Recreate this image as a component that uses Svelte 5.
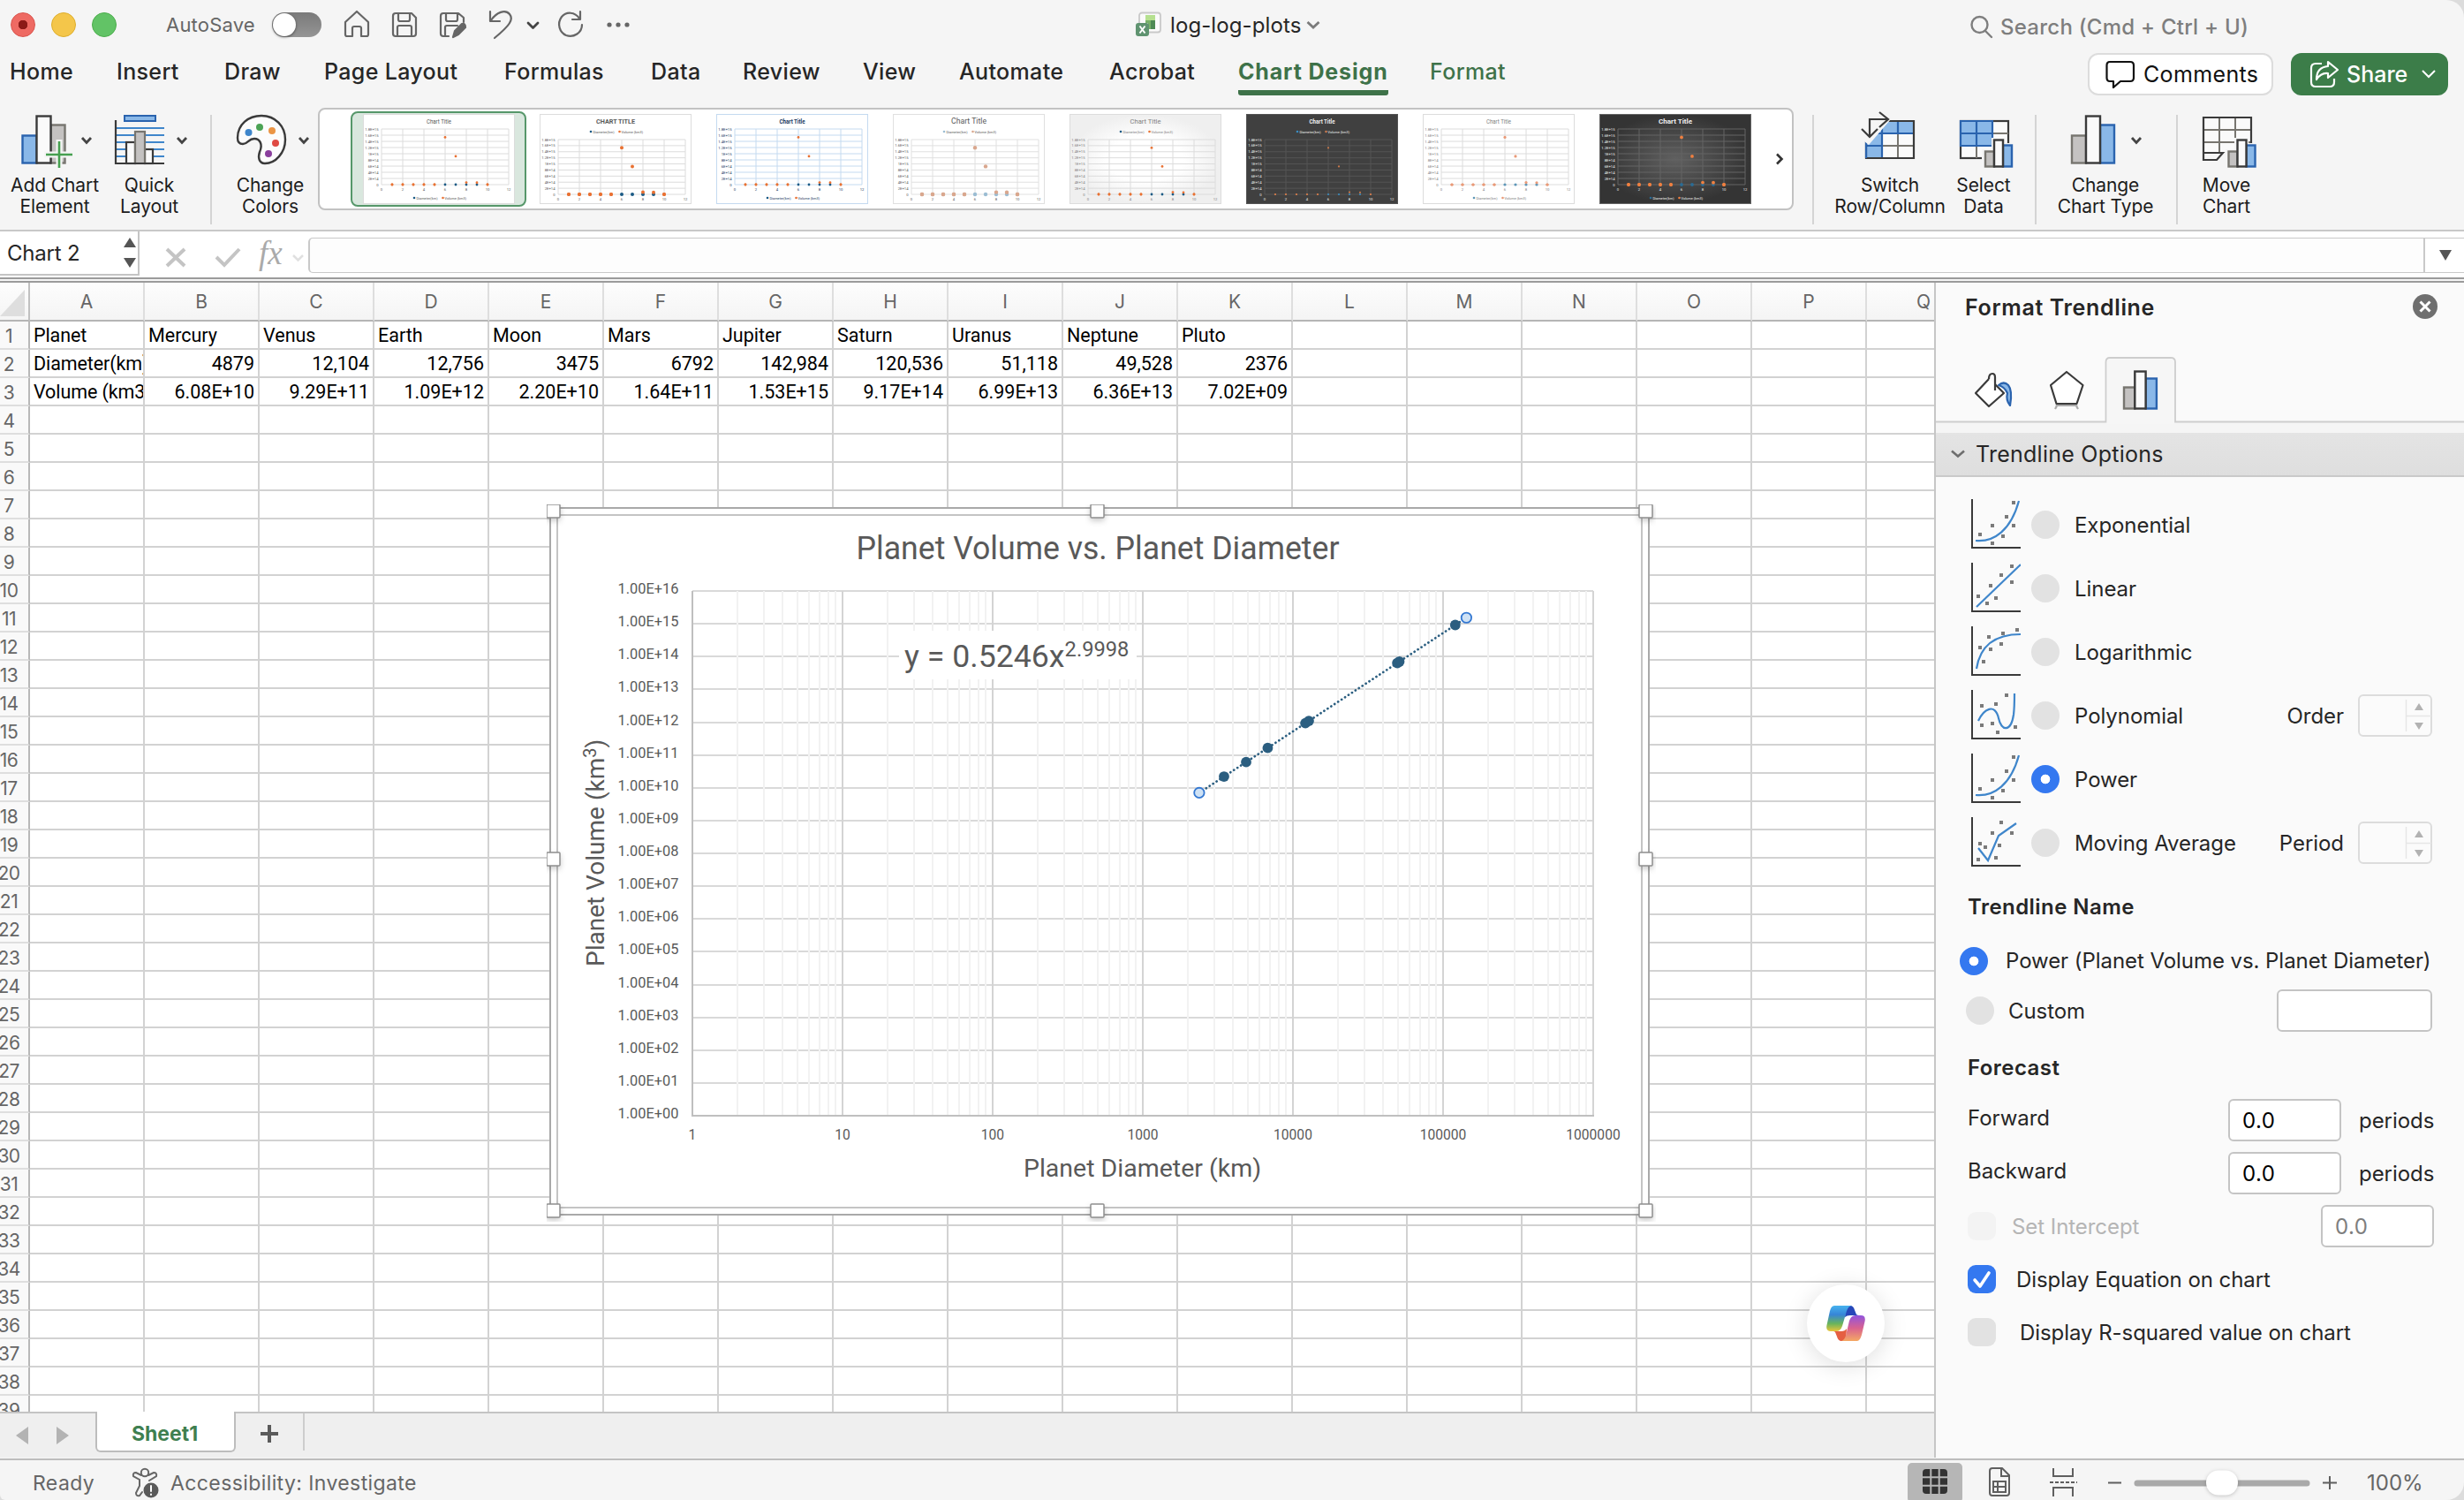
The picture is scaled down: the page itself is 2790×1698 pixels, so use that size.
<script lang="ts">
	const tabs = [
		'Home',
		'Insert',
		'Draw',
		'Page Layout',
		'Formulas',
		'Data',
		'Review',
		'View',
		'Automate',
		'Acrobat',
		'Chart Design',
		'Format'
	];

	// Sheet
	const columns = 'ABCDEFGHIJKLMNOPQ'.split('');
	const rowNumbers = Array.from({ length: 39 }, (_, i) => i + 1);
	const cells: Record<number, string[]> = {
		1: ['Planet', 'Mercury', 'Venus', 'Earth', 'Moon', 'Mars', 'Jupiter', 'Saturn', 'Uranus', 'Neptune', 'Pluto'],
		2: ['Diameter(km)', '4879', '12,104', '12,756', '3475', '6792', '142,984', '120,536', '51,118', '49,528', '2376'],
		3: ['Volume (km3)', '6.08E+10', '9.29E+11', '1.09E+12', '2.20E+10', '1.64E+11', '1.53E+15', '9.17E+14', '6.99E+13', '6.36E+13', '7.02E+09']
	};

	// Chart: both axes are log10
	const diameters = [4879, 12104, 12756, 3475, 6792, 142984, 120536, 51118, 49528, 2376];
	const volumes = [6.08e10, 9.29e11, 1.09e12, 2.2e10, 1.64e11, 1.53e15, 9.17e14, 6.99e13, 6.36e13, 7.02e9];
	const plot = { left: 165, top: 98, width: 1020, height: 594 };
	const px = (d: number) => plot.left + (Math.log10(d) * plot.width) / 6;
	const py = (v: number) => plot.top + plot.height - (Math.log10(v) * plot.height) / 16;
	const points = diameters.map((d, i) => ({ x: px(d), y: py(volumes[i]), end: i === 5 || i === 9 }));
	const decades = [0, 1, 2, 3, 4, 5, 6];
	const minors = decades.slice(0, 6).flatMap((d) => [2, 3, 4, 5, 6, 7, 8, 9].map((m) => m * 10 ** d));
	const yTicks = Array.from({ length: 17 }, (_, i) => i);
	const handles = [
		[8, 8],
		[624, 8],
		[1245, 8],
		[8, 402],
		[1245, 402],
		[8, 800],
		[624, 800],
		[1245, 800]
	];

	// Chart style gallery; size and width are those of the title
	const styles = [
		{ bg: '#fff', grid: '#dcdcdc', text: '#595959', blue: '#1a5a85', orange: '#e97132', top: false, selected: true, bold: false, r: 1.4, size: 7, width: 28 },
		{ bg: '#fff', grid: '#dcdcdc', text: '#595959', blue: '#1a5a85', orange: '#e97132', top: true, caps: true, bold: true, r: 2, size: 7, width: 44 },
		{ bg: '#fff', grid: '#c4daf0', text: '#17375e', blue: '#1a5a85', orange: '#e97132', top: false, bold: true, r: 1.4, size: 6.5, width: 29 },
		{ bg: '#fff', grid: '#e0e0e0', text: '#595959', blue: '#9bbdd3', orange: '#d9a78e', top: true, bold: false, r: 2.2, size: 9, width: 40 },
		{ bg: 'url(#soft)', grid: '#dcdcdc', text: '#808080', blue: '#1a5a85', orange: '#e97132', top: true, bold: false, r: 1.4, size: 8, width: 35 },
		{ bg: '#404040', grid: '#545454', text: '#eee', blue: '#3a8cc0', orange: '#c9794c', top: true, bold: true, r: 1.1, size: 6.5, width: 29 },
		{ bg: '#fff', grid: '#dcdcdc', text: '#808080', blue: '#5e97b8', orange: '#e99a78', top: false, bold: false, r: 1.6, size: 7, width: 28 },
		{ bg: 'url(#night)', grid: '#646464', text: '#f0f0f0', blue: '#2a6c95', orange: '#f08040', top: false, bold: true, r: 1.9, size: 8, width: 38 }
	];
	const thumbLabels = ['1.8E+15', '1.6E+15', '1.4E+15', '1.2E+15', '1E+15', '8E+14', '6E+14', '4E+14', '2E+14', '0'];
	const thumbValues = [0, 0, 0, 0, 0, 1.53, 0.917, 0.07, 0.064, 0];

	// Trendline kinds with their little pictures
	const kinds = [
		{ label: 'Exponential', curve: 'M5 47C26 49 45 35 54 2', dots: [[48, 4], [40, 20], [24, 30], [48, 30], [10, 40], [36, 42], [24, 50]] },
		{ label: 'Linear', curve: 'M6 50L56 2', dots: [[46, 4], [34, 14], [46, 22], [22, 26], [8, 38], [28, 40], [18, 46]] },
		{ label: 'Logarithmic', curve: 'M6 48C10 22 26 9 56 9', dots: [[52, 4], [36, 8], [20, 12], [34, 20], [10, 24], [22, 26], [14, 40]] },
		{ label: 'Polynomial', curve: 'M8 35C14 22 27 14 31 32C34 47 45 48 48 28C49 20 49 12 49 4', dots: [[40, 6], [28, 16], [12, 18], [12, 40], [24, 38], [50, 42], [30, 48]], field: 'Order' },
		{ label: 'Power', curve: 'M5 47C26 49 45 35 54 2', dots: [[48, 4], [40, 20], [24, 30], [48, 30], [10, 40], [36, 42], [24, 50]], checked: true },
		{ label: 'Moving Average', curve: 'M8 35L19 49L31 21L51 7', dots: [[34, 6], [24, 18], [46, 18], [10, 30], [16, 34], [32, 32], [8, 48], [28, 46]], field: 'Period' }
	];
</script>

{#snippet bars(x: number, y: number, w: number, heights: number[], blueFirst = false)}
	<g stroke-width="2.4">
		<rect {x} y={y - heights[0]} width={w} height={heights[0]} fill={blueFirst ? '#8ab8e8' : '#c4c2c1'} stroke={blueFirst ? '#2a63ae' : '#77756f'} />
		<rect x={x + 2 * w} y={y - heights[2]} width={w} height={heights[2]} fill={blueFirst ? '#c4c2c1' : '#8ab8e8'} stroke={blueFirst ? '#77756f' : '#2a63ae'} />
		<rect x={x + w} y={y - heights[1]} width={w} height={heights[1]} fill="#fafafa" stroke="#3a3a3a" />
	</g>
{/snippet}

{#snippet thumb(s)}
	{@const t = s.top ? 29 : 17}
	{@const h = s.top ? 62 : 63}
	<svg class="thumb" viewBox="0 0 172 102">
		<rect x=".5" y=".5" width="171" height="101" fill={s.bg} stroke={s.grid} />
		<text x="86" y={s.top ? 11 : 10.5} font-size={s.size} font-weight={s.bold ? 700 : 400} textLength={s.width} lengthAdjust="spacingAndGlyphs" text-anchor="middle" fill={s.text}>{s.caps ? 'CHART TITLE' : 'Chart Title'}</text>
		{#each thumbLabels as label, i}
			<path d="M21 {t + (i * h) / 9}H165" stroke={s.grid} />
			<text x="17.5" y={t + (i * h) / 9 + 1.5} font-size="4.2" text-anchor="end" fill={s.text}>{label}</text>
		{/each}
		{#each decades as n}
			<path d="M{21 + n * 24} {t}V{t + h}" stroke={s.grid} />
			<text x={21 + n * 24} y={t + h + 6.5} font-size="4.2" text-anchor="middle" fill={s.text}>{n * 2}</text>
		{/each}
		{#each thumbValues as v, i}
			<circle cx={33 + i * 12} cy={t + h} r={s.r} fill={i > 4 && i < 9 ? s.blue : s.orange} />
			<circle cx={33 + i * 12} cy={t + h - (v * h) / 1.8} r={v > 0 || i < 5 || i === 9 ? s.r : 0} fill={s.orange} />
		{/each}
		<g font-size="4.2" fill={s.text} transform="translate(0 {s.top ? 20 : 95})">
			<circle cx="58" cy="0" r="1.3" fill={s.blue} />
			<text x="60.5" y="1.6" textLength="24" lengthAdjust="spacingAndGlyphs">Diameter(km)</text>
			<circle cx="90.5" cy="0" r="1.3" fill={s.orange} />
			<text x="92.500" y="1.6" textLength="24.500" lengthAdjust="spacingAndGlyphs">Volume (km3)</text>
		</g>
	</svg>
{/snippet}

{#snippet spinner()}
	<svg class="spinner" width="84" height="48" viewBox="0 0 84 48">
		<rect x="1" y="1" width="82" height="46" rx="5" fill="#fbfbfb" stroke="#dcdcdc" stroke-width="2" />
		<path d="M54.500 6V42M55 24.500H83" stroke="#e6e6e6" stroke-width="1.500" />
		<path d="M64 18H74L69 10ZM64 32H74L69 40Z" fill="#b2b2b2" />
	</svg>
{/snippet}

<div class="window">
	<svg class="defs" width="0" height="0">
		<defs>
			<radialGradient id="soft"><stop offset=".5" stop-color="#fff" /><stop offset="1" stop-color="#efefef" /></radialGradient>
			<radialGradient id="night"><stop offset="0" stop-color="#606060" /><stop offset="1" stop-color="#343434" /></radialGradient>
		</defs>
	</svg>

	<header class="titlebar">
		<div class="lights"><i class="red"></i><i class="yellow"></i><i class="green"></i></div>
		<span class="autosave">AutoSave</span>
		<span class="toggle"><i></i></span>
		<svg class="quick" width="340" height="56" viewBox="380 0 340 56" fill="none" stroke="#666" stroke-width="2.200" stroke-linejoin="round" stroke-linecap="round">
			<path d="M391 25L404 13L417 25V39Q417 41 415 41H409V32Q409 30 407 30H401Q399 30 399 32V41H393Q391 41 391 39Z" />
			<path d="M448 15H466L471 20V38Q471 41 468 41H448Q445 41 445 38V18Q445 15 448 15ZM451 15V22Q451 24 453 24H462Q464 24 464 22V15M450 41V31Q450 29 452 29H464Q466 29 466 31V41" />
			<path d="M508 41H502Q499 41 499 38V18Q499 15 502 15H519L525 20V25M505 15V22Q505 24 507 24H516Q518 24 518 22V15M504 41V31Q504 29 506 29H518" />
			<path d="M513 42L515 35L523 27Q527 26 527 31L519 39Z" fill="#666" />
			<path d="M555 13V24H566M556 23C562 14 572 10 577 16C582 22 577 29 560 43" />
			<path d="M598 26L603.500 31.500L609 26" stroke="#444" stroke-width="2.800" />
			<path d="M657 13V22H648M656 21C651 13 641 13 636 19C630 27 634 37 641 40C650 43 659 37 659 28" />
			<g fill="#666" stroke="none"><circle cx="690" cy="28" r="2.600" /><circle cx="700" cy="28" r="2.600" /><circle cx="710" cy="28" r="2.600" /></g>
		</svg>
		<div class="doc">
			<svg width="30" height="30" viewBox="0 0 30 30">
				<rect x="4" y="1.500" width="24" height="22" rx="3" fill="#fafafa" stroke="#c9c9c9" stroke-width="1.800" />
				<path d="M11 4H22V10H11Z" fill="#b5e08f" /><path d="M11 10H22V20H14V13H11Z" fill="#77b169" /><path d="M17 10H22V20H17Z" fill="#4e8a54" />
				<rect y="13" width="15" height="15" rx="3" fill="#5f9370" />
				<path d="M4.500 16.500L10.500 24.500M10.500 16.500L4.500 24.500" stroke="#fff" stroke-width="2" />
			</svg>
			<span>log-log-plots</span>
			<svg width="18" height="12" viewBox="0 0 18 12"><path d="M2.500 3L9 9L15.500 3" fill="none" stroke="#7b7b7b" stroke-width="2.800" /></svg>
		</div>
		<div class="search">
			<svg width="26" height="28" viewBox="0 0 26 28" fill="none" stroke="#7e7e7e" stroke-width="2.400" stroke-linecap="round"><circle cx="10.500" cy="11" r="9" /><path d="M17 18L24 25" /></svg>
			<span>Search (Cmd + Ctrl + U)</span>
		</div>
	</header>

	<nav class="menu">
		<div class="tabs">
			{#each tabs as tab}
				<span class:active={tab === 'Chart Design'} class:context={tab === 'Format'}>{tab}</span>
			{/each}
		</div>
		<div class="comments">
			<svg width="34" height="34" viewBox="0 0 34 34" fill="none" stroke="#111" stroke-width="2.200" stroke-linejoin="round"><path d="M5 3H28Q32 3 32 7V21Q32 25 28 25H17L9 32V25H5Q1.500 25 1.500 21V7Q1.500 3 5 3Z" /></svg>
			<span>Comments</span>
		</div>
		<div class="share">
			<svg width="34" height="32" viewBox="0 0 34 32" fill="none" stroke="#fff" stroke-width="2.200" stroke-linejoin="round"><path d="M14 4H7Q2 4 2 9V25Q2 30 7 30H23Q28 30 28 25V21" /><path d="M21 2L32 11L21 20V15Q13 14 8 22Q8 8 21 7Z" /></svg>
			<span>Share</span>
			<svg width="18" height="12" viewBox="0 0 18 12"><path d="M2 2L9 9L16 2" fill="none" stroke="#fff" stroke-width="2" /></svg>
		</div>
	</nav>

	<section class="ribbon">
		<div class="tool add">
			<svg width="124" height="68" viewBox="0 126 124 68">
				{@render bars(25.5, 184.500, 16, [31, 53, 43], true)}
				<path d="M67 158V191M50 175H84" stroke="#f5f5f5" stroke-width="7" /><path d="M67 160V190M52 175H82" stroke="#46a050" stroke-width="2.600" />
				<path d="M93 156L98 161.500L103 156" fill="none" stroke="#444" stroke-width="2.800" />
			</svg>
			<span>Add Chart<br />Element</span>
		</div>
		<div class="tool layout">
			<svg width="90" height="68" viewBox="124 126 90 68">
				<rect x="141" y="131" width="35" height="6" fill="#8ab8e8" stroke="#2a63ae" stroke-width="2" />
				<path d="M132 145H186M132 153H186M132 161H186M132 169H186M132 177H186" stroke="#3f86cb" stroke-width="2" />
				<g fill="#fafafa" stroke="#3a3a3a" stroke-width="2.200"><rect x="143" y="161" width="10" height="24" /><rect x="164" y="169" width="9" height="16" /><rect x="153" y="149" width="11" height="36" fill="#c4c2c1" stroke="#77756f" /><path d="M131 136V185H186" fill="none" /></g>
				<path d="M201 156L206 161.500L211 156" fill="none" stroke="#444" stroke-width="2.800" />
			</svg>
			<span>Quick<br />Layout</span>
		</div>
		<hr />
		<div class="tool colors">
			<svg width="92" height="68" viewBox="260 126 92 68">
				<path d="M269 156C269 141 281 131 296 131C312 131 323 143 323 158C323 173 312 185 300 185C293 185 292 178 294 172C298 163 294 157 288 157C281 157 281 163 275 163C270 163 269 160 269 156Z" fill="#fcfcfc" stroke="#3a3a3a" stroke-width="2.400" />
				<circle cx="281.500" cy="150" r="4" fill="#3f86cb" /><circle cx="294" cy="144" r="4" fill="#4ca355" /><circle cx="308" cy="148" r="4" fill="#eb9545" /><circle cx="312" cy="162" r="4" fill="#df4a43" /><circle cx="304" cy="174" r="4" fill="#8a3f9d" />
				<path d="M339 156L344 161.500L349 156" fill="none" stroke="#444" stroke-width="2.800" />
			</svg>
			<span>Change<br />Colors</span>
		</div>
		<div class="gallery">
			{#each styles as s}
				<div class="style" class:selected={s.selected}>{@render thumb(s)}</div>
			{/each}
			<svg width="12" height="18" viewBox="0 0 12 18"><path d="M3 3.500L8.500 9L3 14.500" fill="none" stroke="#333" stroke-width="2.600" /></svg>
		</div>
		<hr class="after-gallery" />
		<div class="tool switch">
			<svg width="128" height="68" viewBox="2076 126 128 68">
				<rect x="2113" y="137" width="54" height="42" fill="#fafafa" />
				<path d="M2113 137H2167V151H2131V179H2113Z" fill="#8ab8e8" />
				<path d="M2149 151V179M2131 165H2167" stroke="#77756f" stroke-width="2" />
				<path d="M2149 137V151M2113 165H2131M2167 151H2131V179M2113 151H2131V137" fill="none" stroke="#2a63ae" stroke-width="2.200" />
				<path d="M2113 137H2167V179H2113Z" fill="none" stroke="#3a3a3a" stroke-width="2.200" /><path d="M2113 151V179" stroke="#2a63ae" stroke-width="2.200" />
				<path d="M2106 128H2136L2141 135L2116 164L2106 156Z" fill="#f5f5f5" />
				<path d="M2117 155V135H2138M2108 146L2117 155L2126 146M2128 127L2138 135L2128 144" fill="none" stroke="#3a3a3a" stroke-width="2.200" />
			</svg>
			<span>Switch<br />Row/Column</span>
		</div>
		<div class="tool select">
			<svg width="68" height="68" viewBox="2212 126 68 68">
				<rect x="2220" y="137" width="54" height="42" fill="#fafafa" stroke="#3a3a3a" stroke-width="2.200" />
				<path d="M2256 151H2274M2238 165V179M2256 165H2274" stroke="#77756f" stroke-width="2" />
				<path d="M2220 137H2256V165H2220ZM2238 137V165M2220 151H2256" fill="#8ab8e8" stroke="#2a63ae" stroke-width="2.200" />
				<path d="M2244 169H2255V156H2271V162H2282V194H2244Z" fill="#f5f5f5" />
				{@render bars(2248, 188.500, 10, [17, 30, 24])}
			</svg>
			<span>Select<br />Data</span>
		</div>
		<hr class="after-select" />
		<div class="tool type">
			<svg width="114" height="68" viewBox="2327 126 114 68">
				{@render bars(2346, 184.500, 16, [31, 53, 43])}
				<path d="M2414 156L2419 161.500L2424 156" fill="none" stroke="#444" stroke-width="2.800" />
			</svg>
			<span>Change<br />Chart Type</span>
		</div>
		<hr class="after-type" />
		<div class="tool move">
			<svg width="70" height="68" viewBox="2486 126 70 68">
				<rect x="2495" y="133" width="54" height="39" fill="#fafafa" />
				<path d="M2513 133V172M2531 133V172M2495 147H2549M2495 161H2549" stroke="#77756f" stroke-width="2" />
				<path d="M2549 172V133H2495V181H2510L2517 173H2495" fill="none" stroke="#3a3a3a" stroke-width="2.200" />
				<path d="M2520 169H2530V156H2546V162H2556V194H2520Z" fill="#f5f5f5" />
				{@render bars(2523.5, 188.500, 10, [17, 30, 24])}
			</svg>
			<span>Move<br />Chart</span>
		</div>
	</section>

	<section class="formula">
		<div class="namebox">
			<span>Chart 2</span>
			<svg width="16" height="36" viewBox="0 0 16 36" fill="#555"><path d="M1 12H15L8 1ZM1 24H15L8 35Z" /></svg>
		</div>
		<svg class="fx-icons" width="160" height="50" viewBox="178 263 160 50" fill="none" stroke="#c4c4c4" stroke-width="4">
			<path d="M189 282L209 301M209 282L189 301M245 291L254 300L271 282" />
			<path d="M332 289L337.500 294.500L343 289" stroke="#e0e0e0" stroke-width="2.500" />
			<text x="293" y="299" font-family="Liberation Serif" font-style="italic" font-size="37" fill="#aaa" stroke="none">fx</text>
		</svg>
		<div class="input"></div>
		<div class="expand"><svg width="16" height="12" viewBox="0 0 16 12"><path d="M1 0H15L8 12Z" fill="#555" /></svg></div>
	</section>

	<main>
		<div class="left">
			<div class="sheet">
				<div class="row head">
					<div class="corner"><svg width="32" height="42" viewBox="0 0 32 42"><path d="M28 8V38H0Z" fill="#dedede" /></svg></div>
					{#each columns as c}<div class="col">{c}</div>{/each}
				</div>
				{#each rowNumbers as n}
					<div class="row">
						<div class="num">{n}</div>
						{#each columns as _, i}
							<div class="cell" class:right={n > 1 && i > 0}>{cells[n]?.[i] ?? ''}</div>
						{/each}
					</div>
				{/each}

				<svg class="chart" width="1256" height="812" viewBox="0 0 1256 812">
					<rect x="4" y="4" width="1244" height="800" fill="#fff" stroke="#a9a9a9" stroke-width="2" />
					<rect x="12" y="12" width="1228" height="784" fill="#fff" stroke="#c4c4c4" stroke-width="2" />
					<text class="title" x="624" y="61.500" text-anchor="middle" textLength="547" lengthAdjust="spacingAndGlyphs">Planet Volume vs. Planet Diameter</text>
					{#each yTicks as n}
						<path d="M165 {Math.round(692 - n * 37.125)}H1185" stroke="#d9d9d9" stroke-width="2" />
						<text class="tick" x="149.500" y={Math.round(692 - n * 37.125) + 2.5} text-anchor="end" textLength="69" lengthAdjust="spacingAndGlyphs">1.00E+{String(n).padStart(2, '0')}</text>
					{/each}
					{#each minors as m}
						<path d="M{Math.round(px(m))} 98V692" stroke="#f2f2f2" stroke-width="2" />
					{/each}
					{#each decades as d}
						<path d="M{165 + d * 170} 98V692" stroke={d ? '#d4d4d4' : '#bfbfbf'} stroke-width="2" />
						<text class="tick" x={165 + d * 170} y="718.500" text-anchor="middle">{10 ** d}</text>
					{/each}
					<path d="M164 692H1186" stroke="#bfbfbf" stroke-width="2" />
					<rect x="399" y="143" width="269" height="55" fill="#fff" />
					<text class="equation" x="405" y="183.500">y = 0.5246x<tspan class="sup" dy="-12">2.9998</tspan></text>
					<path d="M{px(2376)} {py(7.02e9)}L{px(142984)} {py(1.53e15)}" stroke="#2b5e80" stroke-width="2.700" stroke-linecap="round" stroke-dasharray="0.100 4.600" />
					{#each points as p}
						{#if p.end}
							<circle cx={p.x} cy={p.y} r="5.700" fill="#cfe2f5" stroke="#3478d2" stroke-width="1.800" />
						{:else}
							<circle cx={p.x} cy={p.y} r="5.900" fill="#2b5e80" />
						{/if}
					{/each}
					<text class="axis" x="674.500" y="761" text-anchor="middle">Planet Diameter (km)</text>
					<text class="axis vertical" transform="translate(65 523) rotate(-90)">Planet Volume (km<tspan class="sup3" dy="-9">3</tspan><tspan dy="9">)</tspan></text>
					{#each handles as [x, y]}
						<rect class="handle" x={x - 8} y={y - 8} width="15" height="15" rx="1" />
					{/each}
				</svg>

				<div class="copilot">
					<svg width="44" height="40" viewBox="0 0 44 40">
						<defs>
							<linearGradient id="cp1" x1="0" y1="0" x2="0" y2="1"><stop offset="0" stop-color="#46b2ee" /><stop offset=".35" stop-color="#3685d8" /><stop offset=".7" stop-color="#68b45c" /><stop offset="1" stop-color="#eac53a" /></linearGradient>
							<linearGradient id="cp2" x1="0" y1="0" x2="0" y2="1"><stop offset="0" stop-color="#9153dd" /><stop offset=".5" stop-color="#d9628f" /><stop offset="1" stop-color="#f5a863" /></linearGradient>
						</defs>
						<path d="M22 0H28Q31 1 32 5L34 10Q35 11 37 11H27Q23 11 21 13Z" fill="#2747b9" />
						<path d="M22 40H16Q13 39 12 35L10 30Q9 29 8 29H17Q21 29 23 26Z" fill="#e55f42" />
						<path d="M9 0H29Q25 0 23 6L18 23Q16 29 11 29H5Q-1 29 .5 22L4 6Q5.500 0 9 0Z" fill="url(#cp1)" />
						<path d="M35 40H16Q20 40 22 34L26 17Q28 11 33 11H39Q45 11 43.500 18L40 33Q38 40 35 40Z" fill="url(#cp2)" />
					</svg>
				</div>
			</div>
			<div class="sheetbar">
				<svg width="108" height="50" viewBox="0 1600 108 50" fill="#b3b3b3"><path d="M32 1615V1635L18 1625ZM64 1615V1635L78 1625Z" /></svg>
				<div class="sheet-tab">Sheet1</div>
				<div class="plus"><svg width="20" height="20" viewBox="0 0 20 20"><path d="M10 0V20M0 10H20" stroke="#5a5a5a" stroke-width="4" /></svg></div>
			</div>
		</div>

		<aside>
			<div class="pane-title">
				<b>Format Trendline</b>
				<svg width="28" height="28" viewBox="0 0 28 28"><circle cx="14" cy="14" r="14" fill="#6f6f6f" /><path d="M8.500 8.500L19.500 19.500M19.500 8.500L8.500 19.500" stroke="#fff" stroke-width="3" /></svg>
			</div>
			<svg class="pane-tabs" width="598" height="86" viewBox="2192 404 598 86">
				<rect x="2192" y="478" width="598" height="12" fill="#f5f5f5" />
				<path d="M2192 477.500H2384.500V410Q2384.500 405 2389 405H2458Q2463 405 2463 410V477.500H2790" fill="none" stroke="#cdcdcd" stroke-width="1.800" />
				<path d="M2386 480V411Q2386 406 2390 406H2457Q2462 406 2462 411V480Z" fill="#f6f6f6" />
				<g fill="#fff" stroke="#3a3a3a" stroke-width="2.200" stroke-linejoin="round">
					<path d="M2252 429L2237 445L2252 460L2269 445L2259 435" />
					<path d="M2259 442V427Q2259 423 2256 423Q2252 423 2252 429" fill="none" />
					<path d="M2263 436Q2269 431 2274 436Q2279 442 2276 459Q2271 453 2273 445Q2270 438 2263 436Z" fill="#8ab8e8" stroke="#2a63ae" />
					<path d="M2340 421L2358.500 436L2351.500 457H2328.500L2322 436Z" />
					<path d="M2329 458Q2329 460 2327 463M2351 458Q2351 460 2353 463M2329 459H2351" stroke="#aaa" fill="none" />
				</g>
				{@render bars(2405, 462.500, 12.300, [24, 42, 34])}
			</svg>
			<div class="section"><svg width="18" height="12" viewBox="0 0 18 12"><path d="M2 2.500L9 8.500L16 2.500" fill="none" stroke="#6e6e6e" stroke-width="2.600" /></svg>Trendline Options</div>
			<div class="kinds">
				{#each kinds as k}
					<div class="kind">
						<svg width="56" height="58" viewBox="0 0 56 58">
							<path d="M1 0V55H56" fill="none" stroke="#3a3a3a" stroke-width="2" />
							{#each k.dots as [x, y]}<rect x={x - 2} y={y - 2} width="4" height="4" fill="#7a7a7a" />{/each}
							<path d={k.curve} fill="none" stroke="#3f86cb" stroke-width="2.200" />
						</svg>
						<i class="radio" class:on={k.checked}></i>
						<span>{k.label}</span>
						{#if k.field}
							<em>{k.field}</em>
							{@render spinner()}
						{/if}
					</div>
				{/each}
			</div>
			<h4>Trendline Name</h4>
			<div class="line auto"><i class="radio on"></i><span>Power (Planet Volume vs. Planet Diameter)</span></div>
			<div class="line custom"><i class="radio"></i><span>Custom</span><div class="field wide"></div></div>
			<h4 class="forecast">Forecast</h4>
			<div class="line fore"><span>Forward</span><div class="field">0.0</div><em>periods</em></div>
			<div class="line fore"><span>Backward</span><div class="field">0.0</div><em>periods</em></div>
			<div class="line check off"><i class="box"></i><span>Set Intercept</span><div class="field dim">0.0</div></div>
			<div class="line check eq"><i class="box on"><svg width="32" height="32" viewBox="0 0 32 32"><path d="M8 17L14 24L24 9" fill="none" stroke="#fff" stroke-width="3.600" stroke-linecap="round" stroke-linejoin="round" /></svg></i><span>Display Equation on chart</span></div>
			<div class="line check rsq"><i class="box"></i><span>Display R-squared value on chart</span></div>
		</aside>
	</main>

	<footer>
		<span class="ready">Ready</span>
		<svg width="34" height="40" viewBox="148 1660 34 40" fill="none" stroke="#666" stroke-width="2" stroke-linecap="round">
			<circle cx="164" cy="1667" r="4.200" />
			<path d="M160 1670L154 1667Q150 1667 151 1671L158 1675V1682L154 1690Q154 1694 158 1693L161 1689M168 1670L174 1667Q178 1667 177 1671L169 1676" />
			<circle cx="171" cy="1687" r="8.500" fill="#5a5a5a" stroke="none" /><path d="M171 1682V1688M171 1691.500V1692" stroke="#fff" />
		</svg>
		<span class="access">Accessibility: Investigate</span>
		<div class="views">
			<div class="normal">
				<svg width="28" height="28" viewBox="0 0 28 28"><rect width="28" height="28" rx="4" fill="#333" /><path d="M9.300 0V28M18.700 0V28M0 9.300H28M0 18.700H28" stroke="#b6b6b6" stroke-width="2" /></svg>
			</div>
			<svg width="568" height="45" viewBox="2222 1653 568 45" fill="none" stroke="#5f5f5f" stroke-width="2">
				<path d="M2256 1662H2267L2275 1670V1690Q2275 1693 2272 1693H2256Q2253 1693 2253 1690V1665Q2253 1662 2256 1662ZM2266 1662V1671H2275M2257 1677H2271V1689H2257ZM2257 1683H2271M2262 1677V1689" />
				<path d="M2325 1662V1671H2347V1662M2325 1694V1684H2347V1694" /><path d="M2321 1678H2352" stroke-dasharray="4 2" />
				<path d="M2387 1678.500H2402M2630 1678.500H2646M2638 1671V1686" />
				<path d="M2420 1679H2612" stroke="#a9a9a9" stroke-width="7" stroke-linecap="round" />
				<rect class="knob" x="2498" y="1664.500" width="36" height="28" rx="14" />
				<text class="zoom" x="2680" y="1687">100%</text>
			</svg>
		</div>
	</footer>
</div>

<style>
	:global(body) {
		margin: 0;
		background: #dcdcdc;
	}

	.window {
		width: 2790px;
		height: 1698px;
		display: flex;
		flex-direction: column;
		overflow: hidden;
		border-radius: 0 20px 20px 6px;
		background: #f5f5f5;
		color: #262626;
		font-family: Inter, sans-serif;
		font-size: 24px;
		white-space: nowrap;
	}

	svg {
		flex: none;
		display: block;
	}

	.defs {
		position: absolute;
	}

	/* title bar */
	.titlebar {
		height: 56px;
		display: flex;
		align-items: center;
		padding-left: 12px;
	}

	.lights {
		display: flex;
		gap: 18px;
	}

	.lights i {
		width: 28px;
		height: 28px;
		border-radius: 50%;
		box-sizing: border-box;
	}

	.red {
		background: radial-gradient(circle, #8c1a17 5px, #ee6a63 5.500px);
		border: 1px solid #d9534c;
	}

	.yellow {
		background: #f4c64a;
		border: 1px solid #deae2d;
	}

	.green {
		background: #62c366;
		border: 1px solid #4cae4c;
	}

	.autosave {
		width: 120px;
		margin-left: 56px;
		font-size: 22px;
		letter-spacing: 0.2px;
		color: #666;
	}

	.toggle {
		width: 56px;
		height: 28px;
		border-radius: 14px;
		background: linear-gradient(#7a7a7a, #959595);
	}

	.toggle i {
		display: block;
		width: 26px;
		height: 26px;
		margin: 1px;
		border-radius: 50%;
		background: #fff;
		box-shadow: 0 1px 3px #0008;
	}

	.quick {
		margin-left: 16px;
	}

	.doc {
		display: flex;
		align-items: center;
		width: 220px;
		margin-left: 566px;
	}

	.doc span {
		margin: 0 5px 0 9px;
		font-size: 24px;
		letter-spacing: 0.1px;
	}

	.search {
		display: flex;
		align-items: center;
		gap: 8px;
		margin-left: 725px;
		padding-top: 5px;
		color: #7e7e7e;
		font-size: 24px;
		font-weight: 500;
		letter-spacing: 0.25px;
	}

	/* menu */
	.menu {
		height: 58px;
		display: flex;
		align-items: flex-start;
		padding-top: 4px;
		box-sizing: border-box;
	}

	.tabs {
		display: grid;
		grid-template-columns: 121px 122px 113px 204px 166px 104px 136px 109px 170px 146px 217px 100px;
		width: 2353px;
		padding-left: 11px;
		box-sizing: border-box;
		font-size: 25px;
		font-weight: 500;
		letter-spacing: 0.35px;
	}

	.tabs span {
		justify-self: start;
		height: 48px;
		line-height: 42px;
		box-sizing: border-box;
	}

	.tabs .active {
		border-bottom: 6px solid #3e7249;
		border-radius: 3px;
		font-weight: 700;
		letter-spacing: 0.85px;
		color: #3e7249;
	}

	.tabs .context {
		color: #3e7249;
	}

	.comments,
	.share {
		height: 48px;
		display: flex;
		align-items: center;
		box-sizing: border-box;
		border-radius: 12px;
		font-size: 25px;
	}

	.comments {
		width: 210px;
		margin-left: 11px;
		padding-left: 18px;
		gap: 9px;
		border: 2px solid #dcdcdc;
		background: #fff;
		letter-spacing: 0.35px;
		color: #111;
	}

	.share {
		width: 178px;
		margin-left: 20px;
		padding-left: 21px;
		background: #3c7d49;
		color: #fff;
		font-weight: 500;
	}

	.share span {
		width: 84px;
		margin-left: 8px;
	}

	/* ribbon */
	.ribbon {
		height: 146px;
		display: flex;
		align-items: flex-start;
		border-bottom: 2px solid #c8c8c8;
	}

	.tool {
		display: flex;
		flex-direction: column;
		align-items: center;
		padding-top: 12px;
	}

	.tool span {
		width: 160px;
		margin: 4px -50px 0;
		text-align: center;
		font-size: 21px;
		line-height: 24px;
		letter-spacing: -0.1px;
		color: #1c1c1c;
	}

	.ribbon hr {
		width: 2px;
		height: 124px;
		margin: 16px 20px 0 24px;
		border: 0;
		background: #d4d4d4;
	}

	.ribbon .after-gallery {
		margin: 16px 22px 0 21px;
	}

	.select {
		margin-left: 8px;
	}

	.ribbon .after-select {
		margin: 16px 21px 0 24px;
	}

	.ribbon .after-type {
		margin: 16px 20px 0 23px;
	}

	.gallery {
		width: 1671px;
		height: 116px;
		display: flex;
		align-items: center;
		box-sizing: border-box;
		margin: 8px 0 0 8px;
		padding-left: 35px;
		border: 2px solid #c2c2c2;
		border-radius: 8px;
		background: #fff;
	}

	.style {
		width: 200px;
		height: 108px;
		display: flex;
		align-items: center;
		justify-content: center;
	}

	.style.selected {
		width: 199px;
		margin-right: 1px;
		box-sizing: border-box;
		border: 2.500px solid #56976a;
		border-radius: 8px;
		background: #d9e7de;
	}

	.thumb {
		width: 172px;
		height: 102px;
		font-family: Roboto, sans-serif;
	}

	.gallery > svg {
		margin-left: 12px;
	}

	/* formula bar */
	.formula {
		height: 52px;
		display: flex;
		background: #fff;
	}

	.namebox {
		width: 158px;
		height: 50px;
		display: flex;
		align-items: center;
		justify-content: space-between;
		box-sizing: border-box;
		padding: 0 1px 0 8px;
		border: solid #c4c4c4;
		border-width: 0 2px 2px 0;
		font-size: 24px;
		letter-spacing: -0.2px;
	}

	.fx-icons {
		margin: 1px 11px 0 20px;
		overflow: visible;
	}

	.input {
		flex: 1;
		height: 40px;
		box-sizing: border-box;
		margin-top: 7px;
		border: solid #c9c9c9;
		border-width: 1px 0 1px 2px;
		border-radius: 5px 0 0 5px;
		background: #fdfdfd;
	}

	.expand {
		width: 46px;
		height: 40px;
		display: flex;
		align-items: center;
		box-sizing: border-box;
		margin-top: 7px;
		padding-left: 15px;
		border: solid #c9c9c9;
		border-width: 1px 0 1px 2px;
	}

	/* sheet */
	main {
		height: 1331px;
		display: flex;
		border-top: 6px double #9b9b9b;
		overflow: hidden;
	}

	.left {
		width: 2190px;
		height: 1330px;
		overflow: hidden;
	}

	.sheet {
		position: relative;
		height: 1278px;
		overflow: hidden;
		background: #fff;
		font-size: 21px;
	}

	.row {
		display: flex;
		height: 32px;
	}

	.row > div {
		flex: none;
		box-sizing: border-box;
	}

	.head {
		height: 44px;
		background: linear-gradient(#fdfdfd, #f4f4f4);
		color: #666;
	}

	.corner {
		width: 34px;
		border-right: 2px solid #c0c0c0;
		border-bottom: 2px solid #b5b5b5;
	}

	.col {
		width: 130px;
		line-height: 44px;
		text-align: center;
		border-right: 2px solid #dedede;
		border-bottom: 2px solid #b5b5b5;
	}

	.num {
		width: 34px;
		display: flex;
		justify-content: center;
		padding-right: 12px;
		line-height: 34px;
		background: #f9f9f9;
		border-right: 2px solid #b8b8b8;
		border-bottom: 2px solid #dedede;
		color: #666;
		letter-spacing: -0.5px;
	}

	.cell {
		width: 130px;
		padding: 0 4px;
		overflow: hidden;
		line-height: 32px;
		border: solid #d2d2d2;
		border-width: 0 2px 2px 0;
		font-family: Roboto, sans-serif;
		font-size: 21.500px;
		color: #000;
	}

	.num + .cell {
		padding-right: 0;
		letter-spacing: -0.1px;
	}

	.right {
		text-align: right;
	}

	.chart {
		position: absolute;
		left: 619px;
		top: 251px;
		font-family: Roboto, sans-serif;
		fill: #595959;
	}

	.title {
		font-size: 37px;
	}

	.tick {
		font-size: 15.600px;
	}

	.equation {
		font-size: 35.700px;
	}

	.sup {
		font-size: 23.700px;
	}

	.axis {
		font-size: 28.500px;
	}

	.vertical {
		font-size: 28px;
	}

	.sup3 {
		font-size: 20px;
	}

	.handle {
		fill: #fff;
		stroke: #8f8f8f;
		stroke-width: 1.500;
		filter: drop-shadow(0 3px 3px #0003);
	}

	.copilot {
		position: absolute;
		left: 2046px;
		top: 1134px;
		width: 88px;
		height: 88px;
		display: flex;
		align-items: center;
		justify-content: center;
		border-radius: 50%;
		background: #fff;
		box-shadow: 0 4px 28px #0002;
	}

	.sheetbar {
		height: 52px;
		display: flex;
		box-sizing: border-box;
		border-top: 2px solid #c4c4c4;
		background: #efefef;
	}

	.sheet-tab {
		width: 159px;
		height: 46px;
		margin-top: -2px;
		box-sizing: border-box;
		padding-right: 2px;
		border: solid #bdbdbd;
		border-width: 0 2px 2px;
		border-radius: 0 0 6px 6px;
		background: #fff;
		line-height: 50px;
		text-align: center;
		font-size: 23px;
		font-weight: 700;
		letter-spacing: 0;
		color: #3f7f50;
	}

	.plus {
		width: 78px;
		height: 42px;
		display: flex;
		align-items: center;
		justify-content: center;
		box-sizing: border-box;
		padding-top: 4px;
		border-right: 2px solid #cdcdcd;
	}

	/* format pane */
	aside {
		width: 598px;
		height: 1330px;
		border-left: 2px solid #c6c6c6;
		background: #fafafa;
		letter-spacing: -0.06px;
	}

	.pane-title {
		height: 84px;
		display: flex;
		justify-content: space-between;
		box-sizing: border-box;
		padding: 13px 30px 0 33px;
		font-size: 25px;
		line-height: 30px;
		letter-spacing: 0.65px;
	}

	.pane-title b,
	h4 {
		font-weight: 600;
	}

	.section {
		height: 52px;
		display: flex;
		align-items: center;
		gap: 11px;
		box-sizing: border-box;
		margin-top: -2px;
		padding-left: 16px;
		border: solid #c9c9c9;
		border-width: 2px 0;
		background: linear-gradient(#e4e4e4, #dedede);
		font-size: 25px;
		letter-spacing: 0.25px;
	}

	.kinds {
		padding-top: 18px;
	}

	.kind {
		height: 72px;
		display: flex;
		align-items: center;
		padding: 0 36px 0 40px;
	}

	.radio {
		flex: none;
		width: 32px;
		height: 32px;
		border-radius: 50%;
		background: #e2e2e2;
	}

	.radio.on {
		background: radial-gradient(circle, #fff 5px, #3478f0 5.700px);
	}

	.kind .radio {
		margin: 0 17px 0 12px;
	}

	em {
		font-style: normal;
	}

	.kind em {
		margin: 0 16px 0 auto;
	}

	h4 {
		height: 74px;
		margin: 0;
		padding-left: 36px;
		line-height: 74px;
		font-size: 24px;
		letter-spacing: 0.45px;
	}

	.forecast {
		height: 62px;
		line-height: 66px;
	}

	.line {
		height: 60px;
		display: flex;
		align-items: center;
	}

	.auto {
		height: 48px;
		gap: 20px;
		padding-left: 27px;
	}

	.auto span {
		padding-bottom: 2px;
	}

	.custom {
		height: 64px;
		gap: 16px;
		padding: 0 36px 0 34px;
	}

	.field {
		width: 128px;
		height: 48px;
		box-sizing: border-box;
		margin-left: auto;
		padding-left: 14px;
		border: 2px solid #c4c4c4;
		border-radius: 6px;
		background: #fff;
		line-height: 46px;
		letter-spacing: 0.4px;
		color: #000;
	}

	.wide {
		width: 176px;
	}

	.dim {
		color: #7e7e7e;
	}

	.fore {
		padding: 0 35px 0 36px;
	}

	.fore span {
		padding-bottom: 6px;
	}

	.fore em {
		width: 84px;
		margin-left: 20px;
	}

	.check {
		padding: 0 34px 0 36px;
	}

	.box {
		width: 32px;
		height: 32px;
		margin-right: 18px;
		border-radius: 9px;
		background: #e2e2e2;
	}

	.box.on {
		background: #3478f0;
	}

	.off .box {
		background: #f3f3f3;
	}

	.off span {
		color: #b5b5b5;
	}

	.eq .box {
		margin-right: 23px;
	}

	.rsq .box {
		margin-right: 27px;
	}

	/* status bar */
	footer {
		height: 47px;
		display: flex;
		align-items: flex-start;
		box-sizing: border-box;
		border-top: 2px solid #bdbdbd;
		color: #666;
		font-size: 23px;
		line-height: 52px;
		letter-spacing: 0.4px;
	}

	footer > svg {
		margin-top: 7px;
	}

	.ready {
		width: 111px;
		padding-left: 37px;
	}

	.access {
		margin-left: 11px;
	}

	.views {
		display: flex;
		margin-left: auto;
		letter-spacing: 0;
	}

	.normal {
		width: 62px;
		height: 45px;
		display: flex;
		align-items: center;
		justify-content: center;
		margin-top: 3px;
		border-radius: 5px;
		background: #b6b6b6;
	}

	.normal svg {
		margin-top: -4px;
	}

	.knob {
		fill: #fff;
		stroke: none;
		filter: drop-shadow(0 1px 2px #0003);
	}

	.zoom {
		fill: #666;
		stroke: none;
		font-size: 24px;
	}
</style>
